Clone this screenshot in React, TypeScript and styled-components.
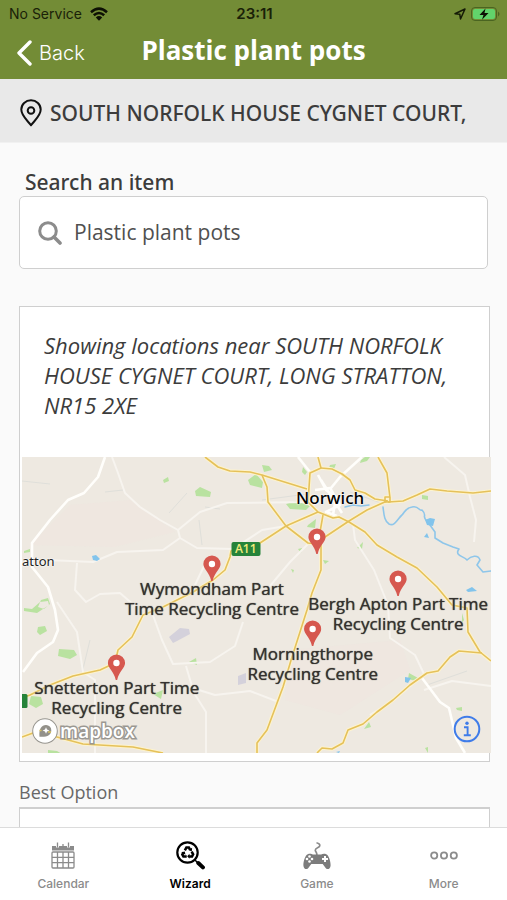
import React from "react";
import styled, { createGlobalStyle } from "styled-components";

const GlobalStyle = createGlobalStyle`
  *, *::before, *::after { box-sizing: border-box; }
  body {
    margin: 0;
    background: #fafafa;
    color: #3c3c3c;
    font-family: "Open Sans", "Noto Sans", sans-serif;
  }
`;

const systemFont = `Inter, Roboto, sans-serif`;
const mediumFont = `"Noto Sans", "Open Sans", sans-serif`;

const Screen = styled.div`
  display: flex;
  flex-direction: column;
  height: 100dvh;
  overflow: hidden;
`;

const Header = styled.header`
  flex: none;
  background: #738c36;
`;

const StatusBar = styled.div`
  display: grid;
  grid-template-columns: 1fr auto 1fr;
  align-items: center;
  height: 27px;
  padding: 0 7px 0 9px;
  color: #1a2108;
  font: 400 14px/20px ${systemFont};
`;

const StatusGroup = styled.div<{ $end?: boolean }>`
  display: flex;
  align-items: center;
  justify-content: ${(p) => (p.$end ? "flex-end" : "flex-start")};
  gap: ${(p) => (p.$end ? 5 : 8)}px;
`;

const Clock = styled.time`
  font-size: 15px;
  font-weight: 600;
`;

const NavBar = styled.div`
  display: grid;
  grid-template-columns: 1fr auto 1fr;
  align-items: center;
  height: 52px;
  padding: 0 16px;
  color: #fff;
`;

const BackButton = styled.button`
  display: flex;
  align-items: center;
  justify-self: start;
  gap: 7px;
  padding: 0;
  border: 0;
  background: none;
  color: inherit;
  font: 300 20px/28px ${systemFont};
  cursor: pointer;
`;

const Title = styled.h1`
  margin: 0;
  padding-bottom: 6px;
  font-size: 26px;
  line-height: 32px;
  font-weight: 700;
`;

const AddressBar = styled.div`
  display: flex;
  flex: none;
  align-items: center;
  gap: 8px;
  height: 64px;
  padding: 4px 20px 0;
  overflow: hidden;
  background: #e9e9e9;
  border-bottom: 1px solid #f1f1f1;
  font: 500 21px/28px ${mediumFont};
  white-space: nowrap;

  svg { flex: none; }
`;

const Content = styled.main`
  flex: 1;
  min-height: 0;
  padding: 25px 17px 0 19px;
  overflow-y: auto;
  scrollbar-width: none;
`;

const SearchLabel = styled.label`
  display: block;
  padding-left: 6px;
  font: 500 21px/28px ${mediumFont};
`;

const SearchBox = styled.div`
  display: flex;
  align-items: center;
  gap: 12px;
  height: 73px;
  margin-right: 2px;
  padding: 0 18px;
  border: 1px solid #cfcfcf;
  border-radius: 5px;
  background: #fff;
`;

const SearchInput = styled.input`
  flex: 1;
  min-width: 0;
  padding: 0 0 2px;
  border: 0;
  outline: 0;
  background: transparent;
  color: #505050;
  font: inherit;
  font-size: 21px;
  line-height: 28px;
`;

const Card = styled.section`
  border: 1px solid #cfcfcf;
  background: #fff;
`;

const MapCard = styled(Card)`
  margin-top: 37px;
  padding: 23px 0 8px;
`;

const Intro = styled.p`
  margin: 0;
  padding: 0 24px 37px;
  font-size: 22px;
  line-height: 30px;
  font-style: italic;
`;

const MapFrame = styled.div`
  position: relative;
  height: 296px;
  margin: 0 -2px 0 2px;
  overflow: hidden;
  background: #eee9e1;
`;

const MapDrawing = styled.svg`
  display: block;
  width: 100%;
  height: 100%;
`;

const Pin = styled.div<{ $x: number; $y: number }>`
  position: absolute;
  left: ${(p) => p.$x}%;
  top: ${(p) => p.$y}%;
  display: flex;
  flex-direction: column;
  align-items: center;
  transform: translateX(-50%);
  color: #35322f;
  font-size: 17px;
  line-height: 20px;
  text-align: center;
  white-space: pre;
  text-shadow: 0 0 1px #35322f, 0 0 2px #f3efe8, 0 0 2px #f3efe8;

  svg { display: block; margin-bottom: -3px; }
`;

const Place = styled.span<{ $x: number; $y: number; $large?: boolean }>`
  position: absolute;
  left: ${(p) => p.$x}%;
  top: ${(p) => p.$y}%;
  transform: translate(${(p) => (p.$large ? "-50%" : "0")}, -50%);
  color: ${(p) => (p.$large ? "#000" : "#222")};
  font-family: ${mediumFont};
  font-size: ${(p) => (p.$large ? 17 : 13)}px;
  line-height: 24px;
  font-weight: ${(p) => (p.$large ? 500 : 400)};
  text-shadow: 0 0 2px #fff, 0 0 2px #fff;
`;

const RoadShield = styled.span<{ $x: number; $y: number }>`
  position: absolute;
  left: ${(p) => p.$x}%;
  top: ${(p) => p.$y}%;
  transform: translate(-50%, -50%);
  min-width: 29px;
  height: 14px;
  border-radius: 2px;
  background: #26833a;
  color: #f3ec7c;
  font-size: 12px;
  line-height: 14px;
  font-weight: 600;
  text-align: center;
`;

const MapLogo = styled.a`
  position: absolute;
  left: 10px;
  bottom: 9px;
  display: flex;
  align-items: center;
  gap: 2px;
  color: #fff;
  font-size: 19px;
  line-height: 26px;
  font-weight: 600;
  text-decoration: none;
  -webkit-text-stroke: 3px #9b9892;
  paint-order: stroke fill;
`;

const InfoButton = styled.button`
  position: absolute;
  right: 10px;
  bottom: 10px;
  display: flex;
  padding: 0;
  border: 0;
  background: none;
  cursor: pointer;
`;

const OptionHeading = styled.h2`
  margin: 17px 0 2px;
  color: #686868;
  font-size: 18px;
  line-height: 26px;
  font-weight: 400;
`;

const OptionCard = styled(Card)`
  min-height: 120px;
  border-top-width: 2px;
`;

const TabBar = styled.nav`
  display: grid;
  flex: none;
  grid-template-columns: repeat(4, 1fr);
  height: 73px;
  border-top: 1px solid #dcdcdc;
  background: #fff;
`;

const Tab = styled.a<{ $active?: boolean }>`
  display: flex;
  flex-direction: column;
  align-items: center;
  gap: 4px;
  padding-top: 13px;
  color: ${(p) => (p.$active ? "#000" : "#8b8b8b")};
  font: ${(p) => (p.$active ? 600 : 500)} 12px/18px ${systemFont};
  text-decoration: none;
`;

const WifiIcon = () => (
  <svg width="18" height="14" viewBox="0 0 18 14" aria-hidden="true">
    <g fill="none" stroke="#0d1004" strokeWidth="2.5">
      <path d="M1 5.2Q9-2 17 5.2" />
      <path d="M3.8 8.3Q9 3.6 14.2 8.3" />
    </g>
    <path d="M5.8 10.4Q9 7.7 12.2 10.4L9 13.8z" fill="#0d1004" />
  </svg>
);

const LocationArrow = () => (
  <svg width="12" height="12" viewBox="0 0 12 12" aria-hidden="true">
    <path d="M1 5.7 11 1 6.5 11 5.8 6.3z" fill="none" stroke="#141a06" strokeWidth="1.5" strokeLinejoin="round" />
  </svg>
);

const BatteryIcon = () => (
  <svg width="29" height="14" viewBox="0 0 29 14" aria-hidden="true">
    <rect x=".5" y=".5" width="25" height="13" rx="3.5" fill="none" stroke="#4a6421" />
    <rect x="2" y="2" width="22" height="10" rx="2" fill="#62d36b" />
    <path d="M27 4.5q3 2.5 0 5z" fill="#4a6421" />
    <path d="M14.5 1.5 8.5 8h4L11 12.8 17.5 6h-4z" fill="#0d1004" />
  </svg>
);

const BackChevron = () => (
  <svg width="16" height="26" viewBox="0 0 16 26" aria-hidden="true">
    <path d="M14 2 3 13l11 11" fill="none" stroke="#fff" strokeWidth="3.4" strokeLinecap="round" strokeLinejoin="round" />
  </svg>
);

const AddressPin = () => (
  <svg width="22" height="28" viewBox="0 0 22 28" aria-hidden="true">
    <g fill="none" stroke="#111" strokeWidth="2">
      <path d="M11 26.3C8.3 22.2 1.3 17.2 1.3 10.6a9.7 9.3 0 0 1 19.4 0C20.7 17.2 13.7 22.2 11 26.3z" strokeLinejoin="round" />
      <circle cx="11" cy="11.5" r="3.3" />
    </g>
  </svg>
);

const SearchIcon = () => (
  <svg width="24" height="24" viewBox="0 0 24 24" aria-hidden="true">
    <g fill="none" stroke="#8c8c8c">
      <circle cx="10" cy="10" r="8.3" strokeWidth="3" />
      <path d="m16 16 6 6" strokeWidth="3.6" strokeLinecap="round" />
    </g>
  </svg>
);

const MapPinIcon = () => (
  <svg width="18" height="27" viewBox="0 0 18 27" aria-hidden="true">
    <path d="M9 .5a8.6 8.6 0 0 0-8.6 8.6C.4 14 6.3 17 8.3 26h1.4C11.7 17 17.6 14 17.6 9.1A8.6 8.6 0 0 0 9 .5z" fill="#d6584f" />
    <circle cx="9" cy="9" r="3.2" fill="#fff" />
  </svg>
);

const InfoIcon = () => (
  <svg width="28" height="28" viewBox="0 0 28 28" aria-hidden="true">
    <circle cx="14" cy="14" r="12.3" fill="none" stroke="#3f7ce9" strokeWidth="2" />
    <circle cx="14" cy="8.3" r="1.7" fill="#3f7ce9" />
    <path d="M11 12.3h3.6v7.6M10.8 20.2h7" fill="none" stroke="#3f7ce9" strokeWidth="1.9" />
  </svg>
);

const MapLogoMark = () => (
  <svg width="26" height="26" viewBox="0 0 26 26" aria-hidden="true">
    <circle cx="13" cy="13" r="11.8" fill="#fff" stroke="#97958f" strokeWidth="2" />
    <path d="M7.5 18.7C6.8 11 9.5 7 14 7a5.2 5.2 0 0 1 5.3 5.4c0 4.5-4.5 7-11.8 6.3z" fill="#93918a" />
    <path d="m14 9.2 1 2.3 2.4.9-2.4 1-1 2.3-1-2.3-2.4-1 2.4-.9z" fill="#fff" />
    <path d="M7.5 12.5h2M16 14h3" stroke="#d9c25c" strokeWidth="1.5" />
  </svg>
);

const CalendarIcon = () => (
  <svg width="28" height="30" viewBox="0 0 28 30" aria-hidden="true">
    <path d="M3 5h22v4.5H3z" fill="#8b8b8b" />
    <g stroke="#fff" strokeWidth="3"><path d="M8.5 2v4.500M19.5 2v4.500" /></g>
    <g fill="none" stroke="#8b8b8b" strokeWidth="1.3">
      <path d="M8.5 1.5v5M14 3v4M19.5 1.5v5" />
      <rect x="3" y="11" width="22" height="16" rx="1" />
      <path d="M3 16.3h22M3 21.6h22M8.5 11v16M14 11v16M19.5 11v16" />
    </g>
  </svg>
);

const WizardIcon = () => (
  <svg width="30" height="30" viewBox="0 0 30 30" aria-hidden="true">
    <circle cx="12.5" cy="11.5" r="10.2" fill="none" stroke="#000" strokeWidth="2.2" />
    <path d="m20 19 3 3" stroke="#000" strokeWidth="1.5" />
    <path d="m23.3 22 4.600 4.400" stroke="#000" strokeWidth="4" strokeLinecap="round" />
    <g transform="translate(1.2 .3) scale(.9)">
      <g fill="none" stroke="#000" strokeWidth="2.8">
        <path d="m9.6 10 1.7-3h2.8l1.4 2.5" />
        <path d="m17.2 11.5 1.6 3-1.2 2.3h-3.3" />
        <path d="M11.7 16.8H8l-1.2-2.2 1.4-2.4" />
      </g>
      <path d="m17.7 7.3-.4 4-3.6-1.6zM14.8 13.9v5.6l-2.6-2.8zM5.5 12.1l4-.8.8 3.7z" fill="#000" />
    </g>
  </svg>
);

const GameIcon = () => (
  <svg width="30" height="30" viewBox="0 0 30 30" aria-hidden="true">
    <path d="M14.5 1.8q4 1 3.2 3.2c-.7 2-4.4 1.6-4.4 4.2 0 1.6 1.6 1.8 1.6 4.8" fill="none" stroke="#8b8b8b" strokeWidth="1.7" />
    <path d="M5.8 13.2c1.8-.7 4-.4 5 .4h8.400c1-.8 3.200-1.100 5-.4 2.600 1 4.600 7.300 4.400 11.200-.2 3.700-3.500 5-5.300 2.200L20.700 23H9.300l-2.600 3.600c-1.800 2.800-5.100 1.500-5.300-2.200-.2-3.900 1.800-10.200 4.400-11.200z" fill="#7c7c7c" />
    <g fill="#fff">
      <circle cx="7.5" cy="15.5" r="1.3" /><circle cx="7.5" cy="20.5" r="1.3" />
      <circle cx="5" cy="18" r="1.3" /><circle cx="10" cy="18" r="1.3" />
    </g>
    <path d="M23 15v6M20 18h6" stroke="#fff" strokeWidth="2" />
  </svg>
);

const MoreIcon = () => (
  <svg width="30" height="30" viewBox="0 0 30 30" aria-hidden="true">
    <g fill="none" stroke="#8b8b8b" strokeWidth="1.8">
      <circle cx="5.2" cy="14.5" r="3.1" /><circle cx="15" cy="14.5" r="3.1" /><circle cx="24.8" cy="14.5" r="3.1" />
    </g>
  </svg>
);

const mainRoads = [
  "M205 457 218 467 230 471 250 472 262 475 307 489",
  "M262 475 267 487 268 502 286 526 308 543 317 544",
  "M318 457 321 468 310 473 308 502 318 512 333 518 339 517 349 522 365 532 377 545 397 557 417 568 437 587 452 605 467 608 468 632 480 652 491 661",
  "M321 468 332 469 342 474 350 480 355 490 365 493 375 499 388 501",
  "M378 457 387 473 390 498M385 497h5v5h-5z",
  "M388 502 403 501 417 495 430 489 447 491 473 493 491 491",
  "M387 501 367 510 349 521 325 537 317 544",
  "M318 512 286 526 260 543 231 551 230 557 225 570 213 580 193 592 163 607 143 615 132 637 118 650 115 663 100 670 73 676 50 685 30 695 22 698",
  "M323 515 320 532 321 547 321 570 312 593 307 610 292 657 283 687 267 730 257 743 257 753",
  "M317 753 322 748 332 749 343 743 348 730 363 724 377 712 393 700 410 685 427 673 438 671 450 657 459 651 482 653",
  "M22 737 33 733 57 737 83 744 133 747 163 753",
];

const whiteRoads = [
  "M105 457 98 477 84 493 68 500 50 520 32 543 32 567 48 587 55 610 58 630 53 642 37 653 23 672",
  "M298 457 310 472M362 457 340 477 331 488M318 475 326 490 336 497 333 515M321 480 342 513M315 490 330 488 340 505 326 512 337 516",
  "M422 678 440 702 449 708 456 738 465 753",
];

const laneRoads = [
  "M112 457 118 473 125 493 140 507 160 520 178 530 200 512 227 503 308 502",
  "M178 530 180 538 163 550 117 552 93 562 47 560M180 538 197 548 233 549 262 530 286 526",
  "M77 563 75 590 86 602 100 594 120 593 135 606",
  "M57 602 77 632 83 672 95 680 95 753",
  "M150 607 162 640 173 664 210 662 235 646 243 622",
  "M186 666 194 693 206 712 206 753M186 686 215 695 250 691 276 701",
  "M353 524 355 540 374 570 388 605 390 638 415 655 424 674",
  "M424 674 394 700 370 715M424 690 452 681 491 686",
  "M444 457 465 475 470 497 476 520 474 542",
  "M308 544 290 562 270 586M205 564 195 585",
];

const MapArt = () => (
  <MapDrawing viewBox="22 457 469 296" preserveAspectRatio="xMidYMid slice" aria-hidden="true">
    <rect x="22" y="457" width="469" height="296" fill="#eee9e1" />
    <g fill="#efe5df" opacity=".7">
      <path d="M30 545 70 505 130 500 175 532 115 547zM290 650 400 640 410 670 340 715 285 700z" />
    </g>
    <g fill="#b9e2a0">
      <path d="M163 480l5-3 1 4-5 2zM195 491l5-4 11 5-1 5-14-1zM248 480l8-6 7 8-1 6-12-3z" />
      <path d="M262 465l7 1 3 4-8 2zM303 467l4 5-2 3-3-3zM330 465l6-1-2 5-5-1zM361 460l4-3h5l-3 4-7 2z" />
      <path d="M59 649l15 1 3 5-7 4-12-3zM24 611l13 2 12-8-1-4-8 1-8 7-8-1zM38 627l7-1 2 5-7 4-3-3zM41 600l7-2 2 6-6 5-6-2zM24 551l6-2v3l-6 1zM31 696l10 1 2 7-7 4-7-4z" />
      <path d="M189 662l7-4 1 7zM153 694l10-4-2 9zM308 525l8-6-1 9-8-1zM286 504l10-3 14 5-4 4-16-1zM422 495l6 1v4l-6-1zM408 679l1-6 9 5-2 3zM364 729l5-7 2 5zM456 708l6-1v4l-5-1zM298 549l4-1-1 5zM323 560l6 1-4 3zM291 569l3 1-1 3zM358 547l5-5-1 7-5-1zM425 748l3-1v6zM462 613l2 7-2 3zM48 750l9 1 5 3H48z" />
    </g>
    <g fill="#d4d1db">
      <path d="M169 637l11-9 9 1 1 5-13 7-4 2zM238 676l8-3v10l-8 2z" />
    </g>
    <g fill="none" stroke="#dfdfda" strokeWidth="1">
      <path d="M22 481l28 3M105 492l18-2M187 493l-18 20M199 520l3 25M205 507l15 2M90 640l-8 33M262 500l45-6M427 685l40-14M350 492l34 12" />
    </g>
    <g fill="none" stroke="#f7f4ef" strokeWidth="2" strokeLinejoin="round">
      {laneRoads.map((d) => <path key={d} d={d} />)}
    </g>
    <g fill="none" stroke="#fffefb" strokeWidth="2.6" strokeLinejoin="round">
      {whiteRoads.map((d) => <path key={d} d={d} />)}
    </g>
    <g fill="none" stroke="#8ec6ea" strokeWidth="1.6" strokeLinejoin="round" strokeLinecap="round">
      <path d="M383 507C384 514 384 521 389 524 395 527 398 518 402 515 405 512 405 508 412 507 419 505 419 512 422 510 428 516 421 516 427 521L435 532 435 538 443 543 453 547 459 549C454 556 464 556 467 560 471 556 478 554 480 560L477 565 483 572 491 571" />
      <path d="M345 507l8-2 8 1 8-1" strokeWidth="1.4" />
    </g>
    <g fill="#82c4ec">
      <path d="M425 520l5-2 5 1-2 7-6-1zM424 537l3-4 2 5zM466 590l6-3 5 4-9 1zM92 556l4-1 4 4-3 2-4-1zM405 677l6 1-3 5-3-1zM336 752l4-1-1 2z" />
    </g>
    <g fill="none" strokeLinejoin="round">
      <g stroke="#fdf3ce" strokeWidth="3.6">{mainRoads.map((d) => <path key={d} d={d} />)}</g>
      <g stroke="#e5c15a" strokeWidth="1.6">{mainRoads.map((d) => <path key={d} d={d} />)}</g>
    </g>
    <path d="M22 694h4a1.5 1.5 0 0 1 1.5 1.5v11a1.5 1.5 0 0 1-1.5 1.5h-4z" fill="#26833a" />
  </MapDrawing>
);

const pins = [
  { x: 63, y: 24, label: "" },
  { x: 40.5, y: 33, label: "Wymondham Part\nTime Recycling Centre" },
  { x: 80.2, y: 38.2, label: "Bergh Apton Part Time\nRecycling Centre" },
  { x: 62, y: 55, label: "Morningthorpe\nRecycling Centre" },
  { x: 20.2, y: 66.5, label: "Snetterton Part Time\nRecycling Centre" },
];

const tabs = [
  { name: "Calendar", Icon: CalendarIcon },
  { name: "Wizard", Icon: WizardIcon, active: true },
  { name: "Game", Icon: GameIcon },
  { name: "More", Icon: MoreIcon },
];

export default function App() {
  return (
    <Screen>
      <GlobalStyle />
      <Header>
        <StatusBar>
          <StatusGroup>No Service <WifiIcon /></StatusGroup>
          <Clock>23:11</Clock>
          <StatusGroup $end><LocationArrow /><BatteryIcon /></StatusGroup>
        </StatusBar>
        <NavBar>
          <BackButton type="button"><BackChevron />Back</BackButton>
          <Title>Plastic plant pots</Title>
        </NavBar>
      </Header>
      <AddressBar><AddressPin />SOUTH NORFOLK HOUSE CYGNET COURT,</AddressBar>
      <Content>
        <SearchLabel htmlFor="item-search">Search an item</SearchLabel>
        <SearchBox>
          <SearchIcon />
          <SearchInput id="item-search" type="text" defaultValue="Plastic plant pots" />
        </SearchBox>
        <MapCard>
          <Intro>Showing locations near SOUTH NORFOLK HOUSE CYGNET COURT, LONG STRATTON, NR15 2XE</Intro>
          <MapFrame>
            <MapArt />
            <Place $x={65.7} $y={14} $large>Norwich</Place>
            <Place $x={0} $y={35}>atton</Place>
            <RoadShield $x={47.7} $y={31}>A11</RoadShield>
            {pins.map((pin) => (
              <Pin key={pin.label} $x={pin.x} $y={pin.y}><MapPinIcon />{pin.label}</Pin>
            ))}
            <MapLogo href="#mapbox"><MapLogoMark />mapbox</MapLogo>
            <InfoButton type="button" aria-label="Map information"><InfoIcon /></InfoButton>
          </MapFrame>
        </MapCard>
        <OptionHeading>Best Option</OptionHeading>
        <OptionCard />
      </Content>
      <TabBar>
        {tabs.map(({ name, Icon, active }) => (
          <Tab key={name} href={`#${name.toLowerCase()}`} $active={active} aria-current={active ? "page" : undefined}>
            <Icon />{name}
          </Tab>
        ))}
      </TabBar>
    </Screen>
  );
}
